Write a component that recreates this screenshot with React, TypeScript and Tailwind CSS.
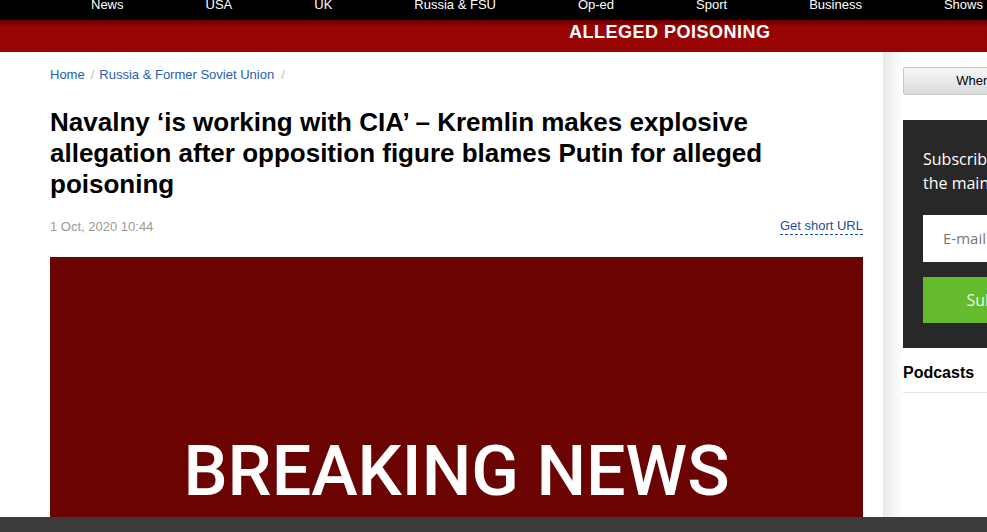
import React from 'react';

const navItems = ['News', 'USA', 'UK', 'Russia & FSU', 'Op-ed', 'Sport', 'Business', 'Shows'];

const App: React.FC = () => {
  return (
    <div className="relative h-screen w-full overflow-hidden bg-white font-['Liberation_Sans',Arial,sans-serif]">
      {/* top nav */}
      <nav className="flex h-[20px] gap-[82px] overflow-hidden bg-black pl-[91px] text-[13px] leading-[13px] text-white">
        {navItems.map((item) => (
          <span key={item} className="mt-[-2px] whitespace-nowrap">
            {item}
          </span>
        ))}
      </nav>

      {/* breaking ticker */}
      <div className="h-[32px] overflow-hidden bg-[linear-gradient(to_bottom,#6a0000_0px,#980404_7px,#990505_100%)] pl-[569px] pt-[1px]">
        <span className="whitespace-nowrap text-[18px] font-bold leading-[18px] tracking-[0.5px] text-white">
          ALLEGED POISONING
        </span>
      </div>

      <div className="flex">
        {/* article */}
        <main className="w-[883px] shrink-0 pl-[50px] pr-[20px]">
          <div className="pt-[15px] text-[13px] leading-[16px]">
            <a className="text-[#2461b3]">Home</a>
            <span className="ml-[6px] mr-[5px] text-[#bbbbbb]">/</span>
            <a className="text-[#2461b3]">Russia &amp; Former Soviet Union</a>
            <span className="ml-[7px] text-[#bbbbbb]">/</span>
          </div>

          <h1 className="mt-[24px] text-[26px] font-bold leading-[31px] text-black">
            Navalny ‘is working with CIA’ – Kremlin makes explosive
            <br />
            allegation after opposition figure blames Putin for alleged
            <br />
            poisoning
          </h1>

          <div className="mt-[18px] flex items-end justify-between text-[13px] leading-[16px]">
            <span className="text-[#9a9a9a]">1 Oct, 2020 10:44</span>
            <a className="border-b border-dashed border-[#1b4fa3] text-[#1b4fa3]">Get short URL</a>
          </div>

          <div className="mt-[22px] flex h-[457px] flex-col items-center bg-[#6b0303] pt-[179px]">
            <span className="font-['Roboto',sans-serif] text-[70px] font-medium leading-[70px] text-white">
              BREAKING NEWS
            </span>
          </div>
        </main>

        {/* sidebar */}
        <aside className="min-h-[480px] w-[240px] shrink-0 bg-[linear-gradient(to_right,#e9e9e9_0px,#ffffff_20px)] px-[20px]">
          <button className="mt-[15px] h-[28px] w-[197px] rounded-[2px] border border-[#c6c6c6] bg-[linear-gradient(to_bottom,#f7f7f7,#dadada)] text-[13px] text-black">
            Where to watch
          </button>

          <div className="mt-[25px] h-[228px] w-[200px] bg-[#282828] px-[20px] pt-[27px]">
            <p className="whitespace-nowrap font-['Open_Sans',sans-serif] text-[16px] leading-[24px] text-white">
              Subscribe to RT
              <br />
              the main news
            </p>
            <div className="mt-[20px] flex h-[47px] items-center bg-white pl-[20px] font-['Open_Sans',sans-serif] text-[15px] text-[#777777]">
              E-mail
            </div>
            <button className="mt-[15px] h-[46px] w-full bg-[#63bb2d] font-['Open_Sans',sans-serif] text-[16px] text-[#eef7e6]">
              Subscribe
            </button>
          </div>

          <div className="mt-[15px] border-b border-[#e3e3e3] pb-[9px] text-[16px] font-bold leading-[20px] text-black">
            Podcasts
          </div>
        </aside>
      </div>

      {/* bottom bar */}
      <div className="fixed bottom-0 left-0 right-0 h-[15px] bg-[#3b3b3b]" />
    </div>
  );
};

export default App;
